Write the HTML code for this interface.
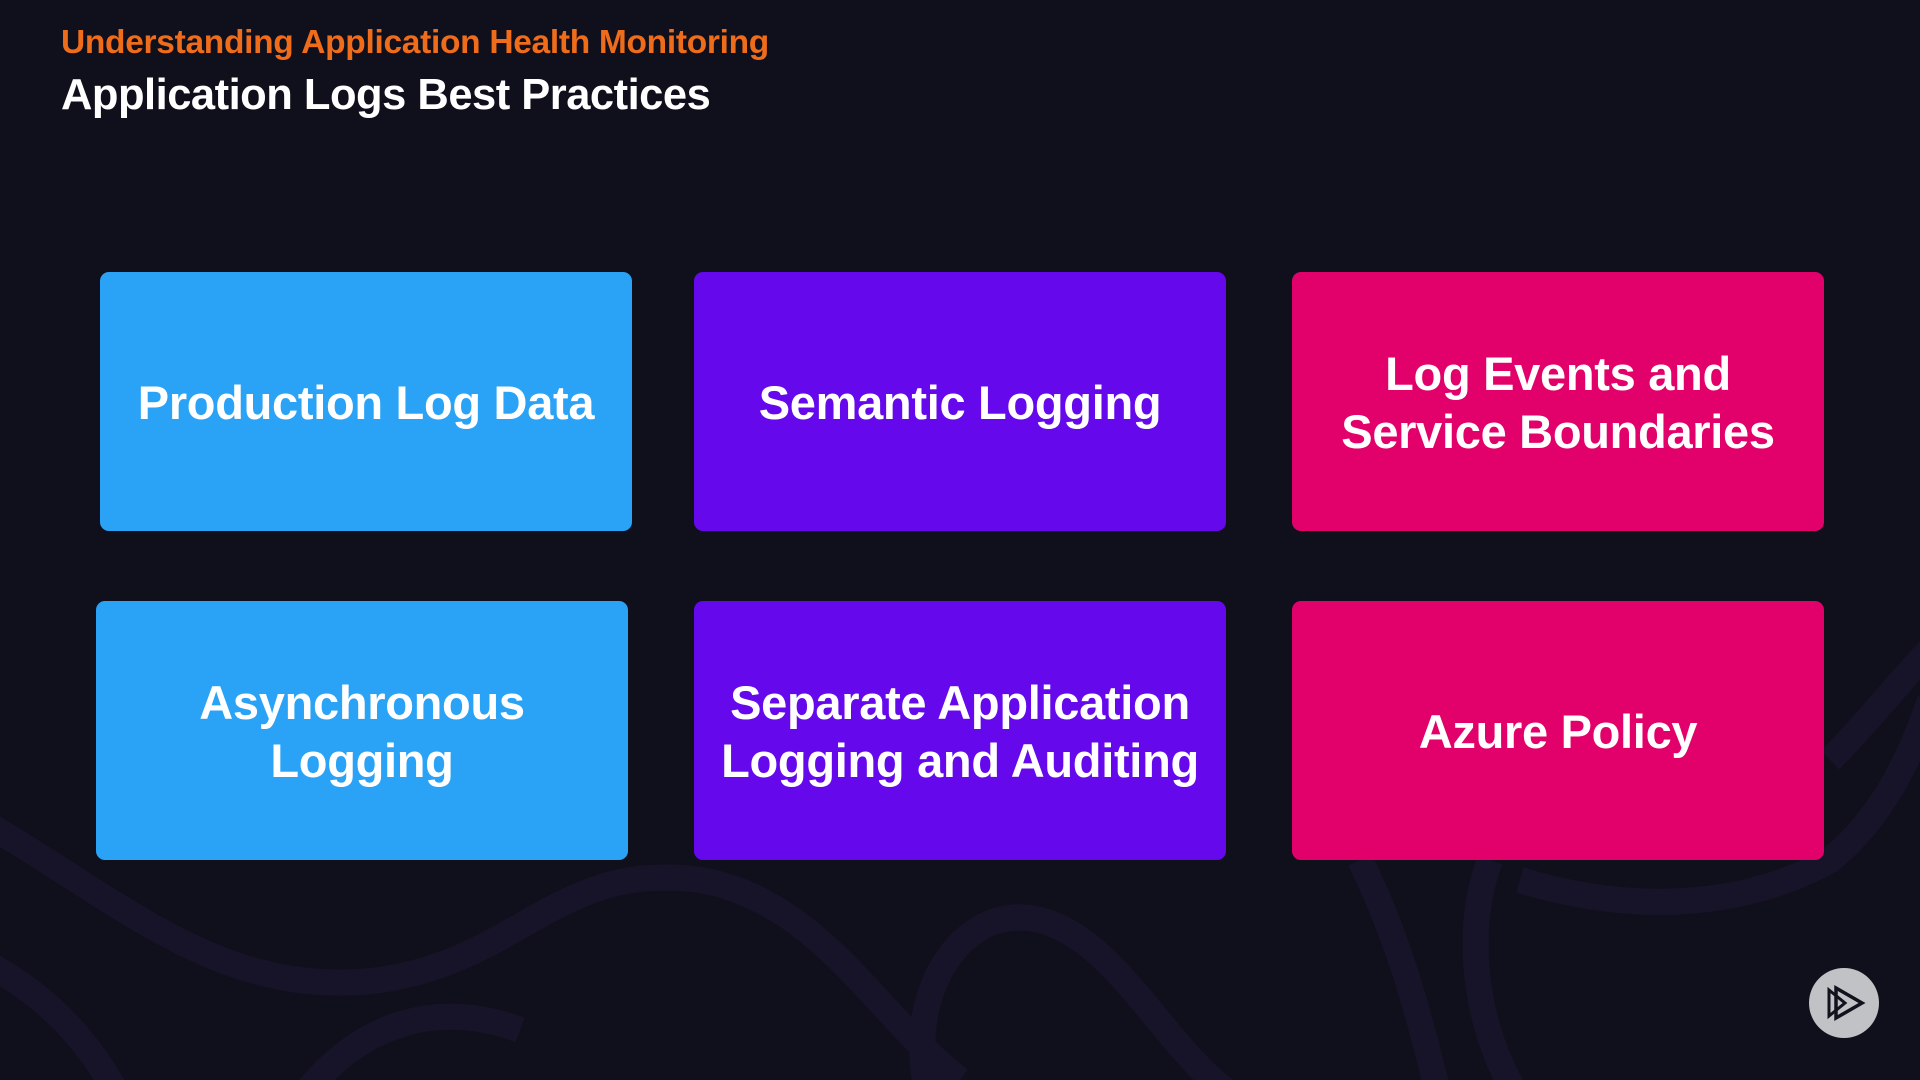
<!DOCTYPE html>
<html><head><style>
body{margin:0;width:1920px;height:1080px;background:#10101d;overflow:hidden;position:relative;font-family:"Liberation Sans",sans-serif;}
.bg{position:absolute;left:0;top:0}
.h1{position:absolute;left:61px;top:24px;color:#ee6c1a;font-weight:bold;font-size:33.5px;letter-spacing:-0.3px}
.h2{position:absolute;left:61px;top:71px;color:#fff;font-weight:bold;font-size:43.5px;letter-spacing:-0.5px}
.box{position:absolute;width:532px;height:259px;border-radius:9px;display:flex;align-items:center;justify-content:center;text-align:center;color:#fff;font-weight:bold;font-size:47px;line-height:58px;letter-spacing:-0.3px;padding-top:2px;box-sizing:border-box}
.b{background:#2aa3f7}.p{background:#6508ec}.r{background:#e2016a}
</style></head><body>
<svg class="bg" width="1920" height="1080" fill="none" stroke="#17142a" stroke-width="26">
<path d="M-20 820 C120 900 220 1000 380 980 C520 960 560 860 700 880 C820 900 880 1020 960 1080"/>
<path d="M-20 960 C60 1000 100 1060 120 1100"/>
<path d="M930 1100 C900 1000 960 900 1040 920 C1120 940 1170 1060 1240 1100"/>
<path d="M1360 860 C1400 940 1420 1020 1440 1100"/>
<path d="M1490 860 C1460 940 1480 1040 1520 1100"/>
<path d="M1520 880 C1650 920 1760 900 1830 860 C1880 820 1910 760 1930 700"/>
<path d="M1830 760 C1870 720 1900 680 1930 650"/>
<path d="M300 1100 C360 1020 440 1000 520 1030"/>
</svg>
<div class="h1">Understanding Application Health Monitoring</div>
<div class="h2">Application Logs Best Practices</div>
<div class="box b" style="left:100px;top:272px">Production Log Data</div>
<div class="box p" style="left:694px;top:272px">Semantic Logging</div>
<div class="box r" style="left:1292px;top:272px">Log Events and<br>Service Boundaries</div>
<div class="box b" style="left:96px;top:601px">Asynchronous<br>Logging</div>
<div class="box p" style="left:694px;top:601px">Separate Application<br>Logging and Auditing</div>
<div class="box r" style="left:1292px;top:601px">Azure Policy</div>
<svg style="position:absolute;left:1809px;top:968px" width="70" height="70">
<circle cx="35" cy="35" r="35" fill="#c0c2c6"/>
<path d="M20 22 L36 35 L20 48 Z" fill="none" stroke="#12121f" stroke-width="3"/>
<path d="M27 20 L53 35 L27 50 Z" fill="none" stroke="#12121f" stroke-width="3.5"/>
</svg>
</body></html>
